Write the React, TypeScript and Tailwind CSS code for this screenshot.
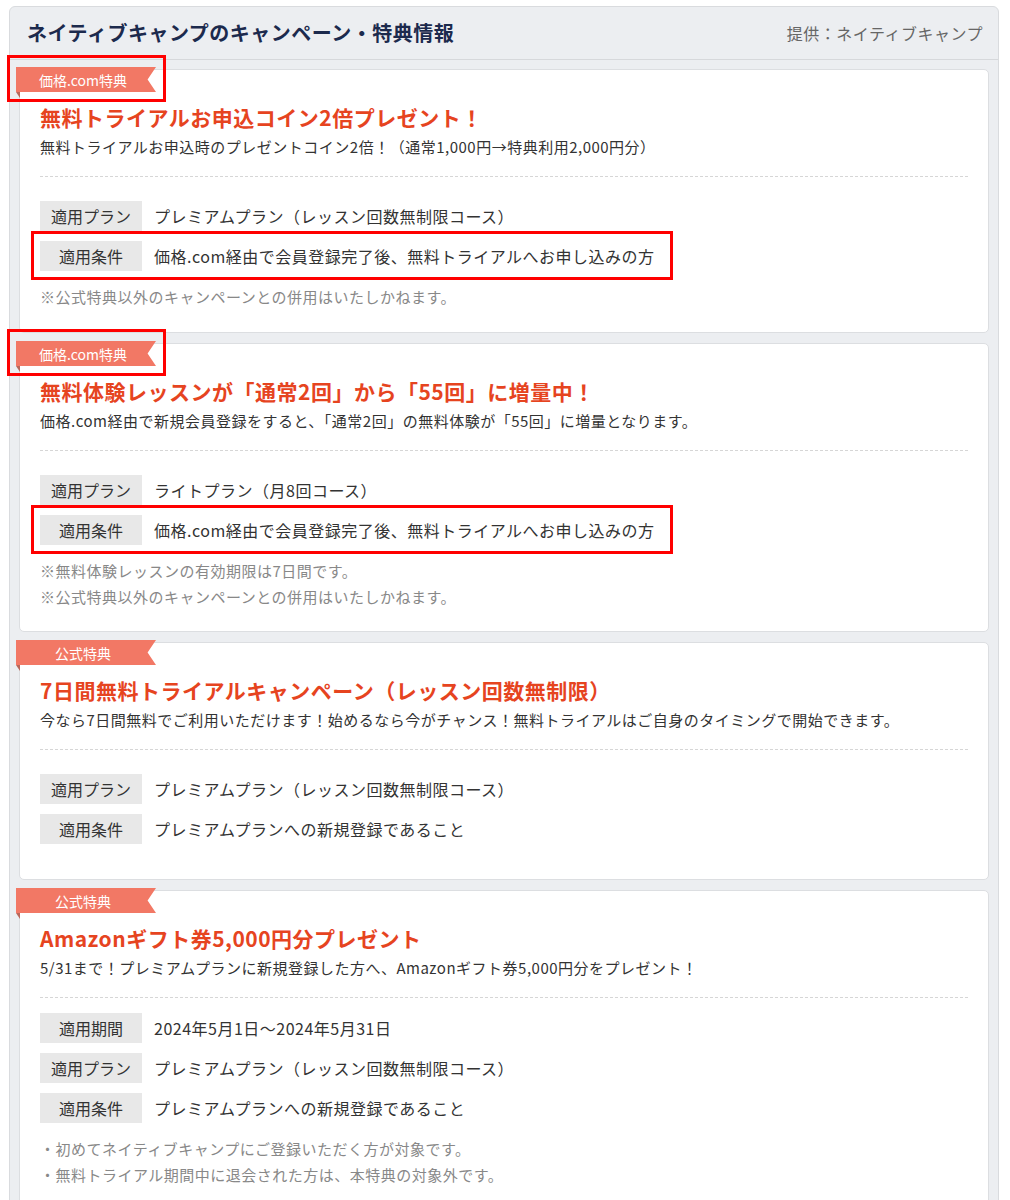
import type { ReactNode } from 'react';

interface Row {
  label: string;
  value: string;
  marked?: boolean;
}

interface Campaign {
  badge: string;
  badgeMarked?: boolean;
  title: string;
  description: string;
  rows: Row[];
  notes?: string[];
  rowsTop: string;
  bottom: string;
}

const campaigns: Campaign[] = [
  {
    badge: '価格.com特典',
    badgeMarked: true,
    title: '無料トライアルお申込コイン2倍プレゼント！',
    description: '無料トライアルお申込時のプレゼントコイン2倍！（通常1,000円→特典利用2,000円分）',
    rows: [
      { label: '適用プラン', value: 'プレミアムプラン（レッスン回数無制限コース）' },
      { label: '適用条件', value: '価格.com経由で会員登録完了後、無料トライアルへお申し込みの方', marked: true },
    ],
    notes: ['※公式特典以外のキャンペーンとの併用はいたしかねます。'],
    rowsTop: 'mt-[24px]',
    bottom: 'pb-[22px]',
  },
  {
    badge: '価格.com特典',
    badgeMarked: true,
    title: '無料体験レッスンが「通常2回」から「55回」に増量中！',
    description: '価格.com経由で新規会員登録をすると、「通常2回」の無料体験が「55回」に増量となります。',
    rows: [
      { label: '適用プラン', value: 'ライトプラン（月8回コース）' },
      { label: '適用条件', value: '価格.com経由で会員登録完了後、無料トライアルへお申し込みの方', marked: true },
    ],
    notes: ['※無料体験レッスンの有効期限は7日間です。', '※公式特典以外のキャンペーンとの併用はいたしかねます。'],
    rowsTop: 'mt-[24px]',
    bottom: 'pb-[21px]',
  },
  {
    badge: '公式特典',
    title: '7日間無料トライアルキャンペーン（レッスン回数無制限）',
    description: '今なら7日間無料でご利用いただけます！始めるなら今がチャンス！無料トライアルはご自身のタイミングで開始できます。',
    rows: [
      { label: '適用プラン', value: 'プレミアムプラン（レッスン回数無制限コース）' },
      { label: '適用条件', value: 'プレミアムプランへの新規登録であること' },
    ],
    rowsTop: 'mt-[24px]',
    bottom: 'pb-[35px]',
  },
  {
    badge: '公式特典',
    title: 'Amazonギフト券5,000円分プレゼント',
    description: '5/31まで！プレミアムプランに新規登録した方へ、Amazonギフト券5,000円分をプレゼント！',
    rows: [
      { label: '適用期間', value: '2024年5月1日～2024年5月31日' },
      { label: '適用プラン', value: 'プレミアムプラン（レッスン回数無制限コース）' },
      { label: '適用条件', value: 'プレミアムプランへの新規登録であること' },
    ],
    notes: ['・初めてネイティブキャンプにご登録いただく方が対象です。', '・無料トライアル期間中に退会された方は、本特典の対象外です。'],
    rowsTop: 'mt-[15px]',
    bottom: 'pb-[22px]',
  },
];

function Ribbon({ children, marked }: { children: ReactNode; marked?: boolean }) {
  return (
    <div className="absolute -left-[4px] -top-[3px]">
      {marked && (
        <span className="absolute -left-[9px] -top-[12px] h-[47px] w-[159px] border-[3px] border-[#ff0000]" />
      )}
      <div className="flex h-[25px] w-[140px] items-center justify-center bg-[#f27865] pr-[6px] text-[14px] leading-none tracking-normal text-white [clip-path:polygon(0_0,100%_0,94%_50%,100%_100%,0_100%)]">
        {children}
      </div>
      <span className="block h-0 w-0 border-l-[4px] border-t-[6px] border-l-transparent border-t-[#b9685b]" />
    </div>
  );
}

function InfoRow({ row }: { row: Row }) {
  return (
    <div className="relative flex h-[30px] items-center">
      {row.marked && (
        <span className="absolute -left-[9px] -top-[10px] h-[49px] w-[642px] border-[3px] border-[#ff0000]" />
      )}
      <span className="flex h-[30px] w-[102px] shrink-0 items-center justify-center bg-[#e8e8e8] text-[16px] tracking-normal text-[#333]">
        {row.label}
      </span>
      <span className="ml-[12px] text-[16px] text-[#333]">{row.value}</span>
    </div>
  );
}

function CampaignCard({ c }: { c: Campaign }) {
  return (
    <section className={`relative rounded-[5px] border border-[#dcdee1] bg-white px-[20px] pt-[33px] ${c.bottom}`}>
      <Ribbon marked={c.badgeMarked}>{c.badge}</Ribbon>
      <h3 className="text-[21px] font-bold leading-[28px] text-[#e6441f]">{c.title}</h3>
      <p className="mt-[5px] text-[15px] leading-[22px] text-[#333]">{c.description}</p>
      <div className="mt-[18px] border-t border-dashed border-[#d6d6d6]" />
      <div className={`${c.rowsTop} flex flex-col gap-[10px]`}>
        {c.rows.map((r) => (
          <InfoRow key={r.label} row={r} />
        ))}
      </div>
      {c.notes && (
        <div className="mt-[13px] text-[15px] leading-[26px] text-[#888]">
          {c.notes.map((n) => (
            <p key={n}>{n}</p>
          ))}
        </div>
      )}
    </section>
  );
}

export default function App() {
  return (
    <div className="min-h-[1200px] bg-white pl-[9px] pt-[6px] font-['Noto_Sans_CJK_JP','Noto_Sans',sans-serif] tracking-[0.5px]">
      <div className="w-[990px] rounded-t-[6px] border border-[#d9dbde] bg-[#eceef1]">
        <header className="flex h-[53px] items-center justify-between border-b border-[#d6d8db] pl-[17px] pr-[15px]">
          <h2 className="text-[20px] font-bold text-[#1c2a4d]">ネイティブキャンプのキャンペーン・特典情報</h2>
          <span className="text-[16px] text-[#666]">提供：ネイティブキャンプ</span>
        </header>
        <div className="flex flex-col gap-[10px] px-[9px] pb-[10px] pt-[9px]">
          {campaigns.map((c) => (
            <CampaignCard key={c.title} c={c} />
          ))}
        </div>
      </div>
    </div>
  );
}
